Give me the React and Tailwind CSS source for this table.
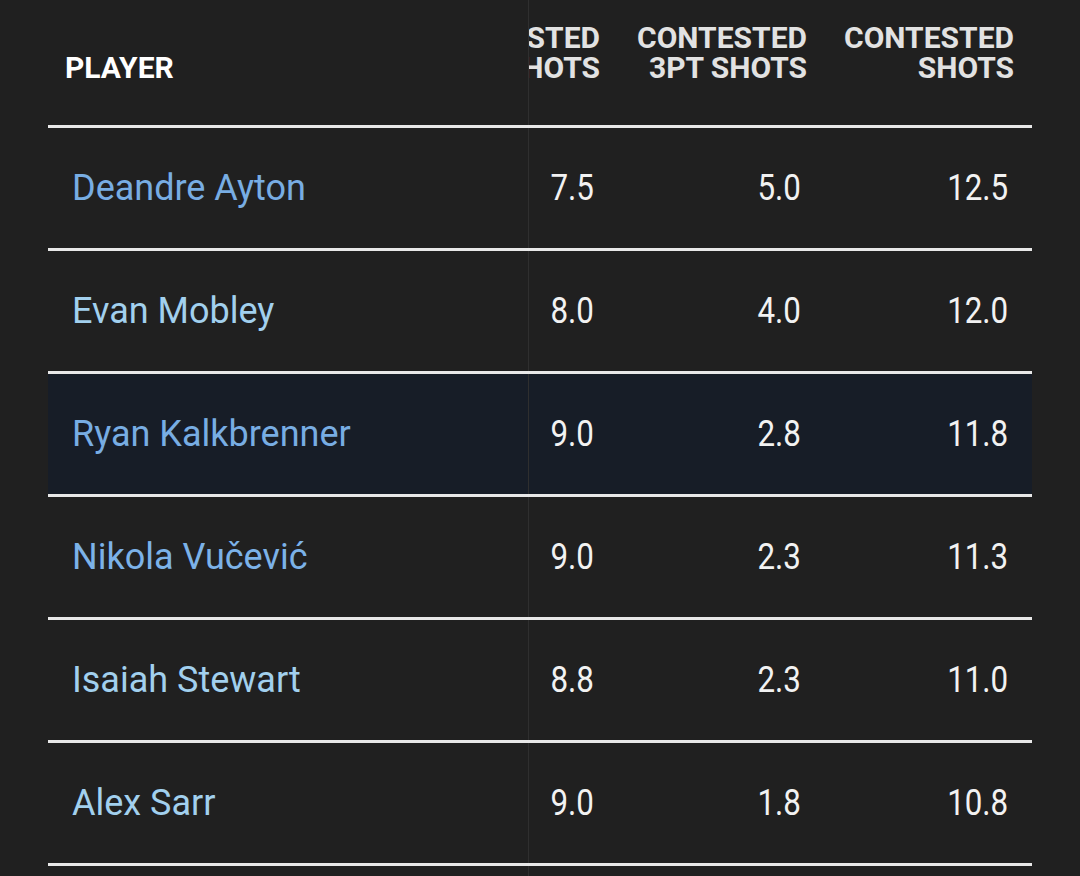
import React, { useEffect, useRef } from 'react';

const rows = [
  { name: 'Deandre Ayton', two: '7.5', three: '5.0', total: '12.5', link: 'text-[#78ade3]' },
  { name: 'Evan Mobley', two: '8.0', three: '4.0', total: '12.0', link: 'text-[#a2d0ee]' },
  { name: 'Ryan Kalkbrenner', two: '9.0', three: '2.8', total: '11.8', link: 'text-[#78ade3]', active: true },
  { name: 'Nikola Vučević', two: '9.0', three: '2.3', total: '11.3', link: 'text-[#7cb2e8]' },
  { name: 'Isaiah Stewart', two: '8.8', three: '2.3', total: '11.0', link: 'text-[#a2d0ee]' },
  { name: 'Alex Sarr', two: '9.0', three: '1.8', total: '10.8', link: 'text-[#a2d0ee]' },
];

const headers = ['CONTESTED 2PT SHOTS', 'CONTESTED 3PT SHOTS', 'CONTESTED SHOTS'];

const App = () => {
  const scroller = useRef(null);

  // table is scrolled all the way right, so the first stat column sits behind the sticky name column
  useEffect(() => {
    if (scroller.current) scroller.current.scrollLeft = scroller.current.scrollWidth;
  }, []);

  return (
    <div className="min-h-screen bg-[#202020] px-12 font-['Roboto',sans-serif]">
      <div ref={scroller} className="overflow-x-auto [scrollbar-width:none]">
        <div className="w-[1102px]">
          {/* Header */}
          <div className="flex h-[128px] border-b-[3px] border-[#e8e8e8]">
            <div className="sticky left-0 z-10 flex w-[481px] shrink-0 items-end border-r border-[#2f2f2f] bg-[#202020] pb-[42px] pl-[17px]">
              <span className="text-[30px] font-bold leading-[30px] text-white">PLAYER</span>
            </div>
            {headers.map((h) => (
              <div key={h} className="flex w-[207px] shrink-0 items-end justify-end pb-[42px] pr-[18px]">
                <span className="w-[180px] text-right text-[30px] font-bold leading-[30px] text-[#e2e2e2]">{h}</span>
              </div>
            ))}
          </div>

          {/* Body */}
          {rows.map((r) => {
            const bg = r.active ? 'bg-[#171d27]' : 'bg-[#202020]';
            return (
              <div key={r.name} className={`flex h-[123px] border-b-[3px] border-[#e8e8e8] ${bg}`}>
                <div className={`sticky left-0 z-10 flex w-[481px] shrink-0 items-center border-r border-[#2f2f2f] pl-[24px] ${bg}`}>
                  <a className={`text-[36px] leading-none ${r.link}`}>{r.name}</a>
                </div>
                {[r.two, r.three, r.total].map((v, i) => (
                  <div key={i} className="flex w-[207px] shrink-0 items-center justify-end pr-6 text-[36px] leading-none text-[#f2f2f2]">
                    <span className="origin-right scale-x-[0.87]">{v}</span>
                  </div>
                ))}
              </div>
            );
          })}

          {/* rest of the list continues below the fold */}
          <div className="flex h-[60px]">
            <div className="sticky left-0 w-[481px] shrink-0 border-r border-[#2f2f2f] bg-[#202020]" />
          </div>
        </div>
      </div>
    </div>
  );
};

export default App;
